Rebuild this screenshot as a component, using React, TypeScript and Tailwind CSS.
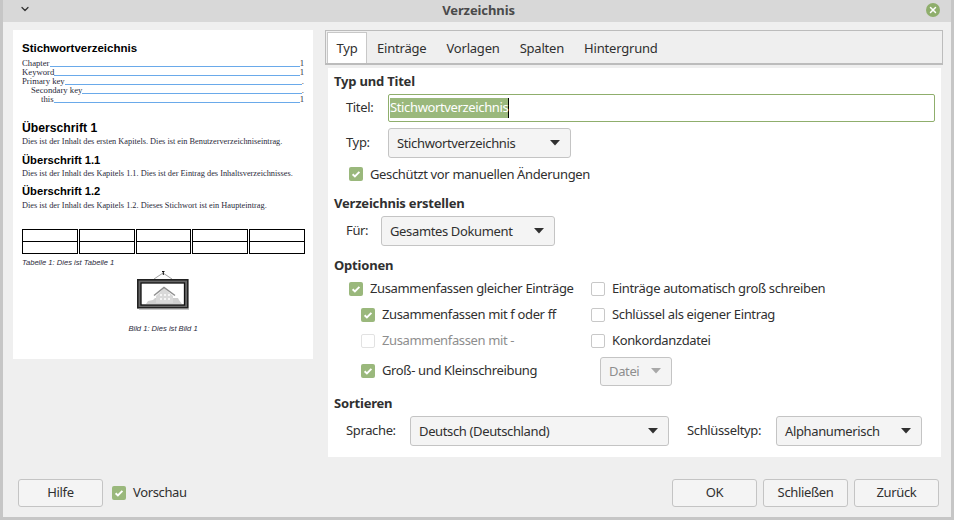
import { ChevronDown, X } from "lucide-react";

const ui = "font-['Noto_Sans',sans-serif] text-[13px] tracking-[-0.36px] text-[#303030]";

function Caret({ muted }: { muted?: boolean }) {
  return (
    <svg width="10" height="6" viewBox="0 0 10 6" className="shrink-0">
      <path d="M0 0h10L5 5.5z" fill={muted ? "#a8a8a8" : "#303030"} />
    </svg>
  );
}

function Combo({ label, className, muted }: { label: string; className: string; muted?: boolean }) {
  return (
    <div
      className={`flex items-center justify-between rounded-[3px] border border-[#c4c4c4] bg-[#f4f4f4] pl-2 pr-[10px] ${muted ? "text-[#8e8e8e]" : ""} ${className}`}
    >
      <span className="pt-[1px]">{label}</span>
      <Caret muted={muted} />
    </div>
  );
}

function Check({ label, checked, disabled }: { label: string; checked?: boolean; disabled?: boolean }) {
  return (
    <div className={`flex items-center gap-[7px] ${disabled ? "text-[#8e8e8e]" : ""}`}>
      {checked ? (
        <svg width="14" height="14" viewBox="0 0 14 14" className="shrink-0">
          <rect width="14" height="14" rx="2" fill="#9ab87c" />
          <path d="M3.6 7.2l2.3 2.2 4.5-4.6" fill="none" stroke="#fff" strokeWidth="1.9" />
        </svg>
      ) : (
        <span className={`size-[14px] shrink-0 rounded-[2px] border bg-white ${disabled ? "border-[#e2e2e2]" : "border-[#c8c8c8]"}`} />
      )}
      <span>{label}</span>
    </div>
  );
}

function Button({ label }: { label: string }) {
  return (
    <div className="flex h-[28px] w-[85px] items-center justify-center rounded-[3px] border border-[#c4c4c4] bg-[#f4f4f4]">
      {label}
    </div>
  );
}

function Heading({ children }: { children: string }) {
  return <div className="font-bold leading-[18px] tracking-[-0.2px] text-[#303030]">{children}</div>;
}

function TocRow({ label, page, indent }: { label: string; page: string; indent: string }) {
  return (
    <div className={`flex h-[9px] items-end leading-[9px] ${indent}`}>
      <span>{label}</span>
      <span className="mb-[1px] h-px flex-1 bg-[#6aaaea]" />
      <span>{page}</span>
    </div>
  );
}

function Preview() {
  const h2 = "font-['Liberation_Sans',sans-serif] font-bold text-black tracking-normal";
  const body = "text-[8.3px] leading-[10px] tracking-normal text-[#2a2a3a] whitespace-nowrap";
  const caption = "font-['Liberation_Sans',sans-serif] text-[7.6px] italic leading-[10px] tracking-normal text-[#2a2a3a]";
  return (
    <div className="flex h-[329px] w-[300px] flex-col bg-white px-[9px] pt-[12px] font-['Liberation_Serif',serif]">
      <div className={`${h2} text-[11.5px] leading-[12px]`}>Stichwortverzeichnis</div>
      <div className="mt-[5px] text-[8.7px] tracking-normal text-[#2a2a3a]">
        <TocRow label="Chapter" page="1" indent="" />
        <TocRow label="Keyword" page="1" indent="" />
        <TocRow label="Primary key" page="." indent="" />
        <TocRow label="Secondary key" page="." indent="pl-[9px]" />
        <TocRow label="this" page="1" indent="pl-[19px]" />
      </div>
      <div className={`${h2} mt-[17px] text-[12.2px] leading-[14px]`}>Überschrift 1</div>
      <div className={`${body} mt-[2px]`}>Dies ist der Inhalt des ersten Kapitels. Dies ist ein Benutzerverzeichniseintrag.</div>
      <div className={`${h2} mt-[7px] text-[11.2px] leading-[12px]`}>Überschrift 1.1</div>
      <div className={`${body} mt-[3px]`}>Dies ist der Inhalt des Kapitels 1.1. Dies ist der Eintrag des Inhaltsverzeichnisses.</div>
      <div className={`${h2} mt-[6px] text-[11.2px] leading-[12px]`}>Überschrift 1.2</div>
      <div className={`${body} mt-[4px]`}>Dies ist der Inhalt des Kapitels 1.2. Dieses Stichwort ist ein Haupteintrag.</div>
      <div className="mt-[18px] grid w-[283px] grid-cols-5 gap-x-px">
        {Array.from({ length: 10 }).map((_, i) => (
          <div key={i} className={`h-[12px] border-x border-t border-black ${i > 4 ? "h-[13px] border-b" : ""}`} />
        ))}
      </div>
      <div className={`${caption} mt-[4px]`}>Tabelle 1: Dies ist Tabelle 1</div>
      <div className="mt-[2px] flex justify-center">
        <svg width="54" height="40" viewBox="0 0 54 40">
          <path d="M18 9l9-6 9 6" fill="none" stroke="#777" strokeWidth="0.7" />
          <path d="M26 1h2.500v1h-.7v3h-1v-3H26z" fill="#111" />
          <rect x="1.800" y="9.800" width="50" height="28" fill="#666" stroke="#222" strokeWidth="1.600" />
          <rect x="5" y="13" width="43.500" height="22" fill="#fff" stroke="#111" strokeWidth="1.300" />
          <path d="M10 34l2-3 5-1 2-2h23l1 2 3 4z" fill="#cfcfcf" />
          <path d="M20 26l8-8 9 8v7H20z" fill="#d9d9d9" />
          <path d="M18 25.500l10-8 11 8" fill="none" stroke="#8f8f8f" strokeWidth="1.500" />
          <path d="M24 24h2v2h-2zM28 24h2v2h-2zM32 24h2v2h-2zM24 28h2v2h-2zM28 28h2v2h-2zM32 28h2v2h-2z" fill="#f5f5f5" />
          <path d="M3 39.300h50" stroke="#bbb" strokeWidth="1" />
        </svg>
      </div>
      <div className={`${caption} mt-[14px] text-center`}>Bild 1: Dies ist Bild 1</div>
    </div>
  );
}

export default function App() {
  const tabs = ["Einträge", "Vorlagen", "Spalten", "Hintergrund"];
  return (
    <div className={`flex h-[520px] w-[954px] flex-col overflow-hidden border-x-[3px] border-b-[3px] border-[#c6c6c6] bg-[#efefef] ${ui}`}>
      <div className="relative flex h-[22px] shrink-0 items-center justify-center bg-[#d8d8d8] pl-[3px] font-bold tracking-[-0.1px] text-[#4a4a4a]">
        <ChevronDown className="absolute left-[16px] top-[3px] size-[12px] text-[#333]" strokeWidth={2.5} />
        Verzeichnis
        <span className="absolute right-[11px] top-[3px] flex size-[14px] items-center justify-center rounded-full bg-[#8fae6c]">
          <X className="size-[10px] text-white" strokeWidth={3.5} />
        </span>
      </div>

      <div className="flex flex-1 pl-[10px] pr-[8px] pt-[8px]">
        <Preview />
        <div className="ml-[12px] flex-1">
          <div className="flex h-[35px] items-stretch border-2 border-t border-x border-[#bcbcbc] pl-[1px] pt-[1px] tracking-[-0.2px]">
            <div className="flex w-[40px] items-center justify-center border-x border-t border-[#c8c8c8] bg-white pt-[1px]">Typ</div>
            {tabs.map((t) => (
              <div key={t} className="flex items-center px-[10px] pt-[3px]">
                {t}
              </div>
            ))}
          </div>
          <div className="ml-[3px] mr-[2px] mt-[3px] flex h-[389px] flex-col bg-white pl-[6px] pr-[6px] pt-[4px]">
            <Heading>Typ und Titel</Heading>
            <div className="mt-[4px] flex items-center">
              <span className="w-[54px] pl-[12px]">Titel:</span>
              <div className="flex h-[28px] flex-1 items-center rounded-[2px] border border-[#8fae6c] px-[1px]">
                <span className="flex h-[20px] items-center border-r border-black bg-[#9ab87c] text-white">Stichwortverzeichnis</span>
              </div>
            </div>
            <div className="mt-[6px] flex items-center">
              <span className="w-[54px] pl-[12px]">Typ:</span>
              <Combo label="Stichwortverzeichnis" className="h-[30px] w-[183px]" />
            </div>
            <div className="ml-[15px] mt-[9px] leading-[14px]">
              <Check label="Geschützt vor manuellen Änderungen" checked />
            </div>
            <div className="mt-[13px]">
              <Heading>Verzeichnis erstellen</Heading>
            </div>
            <div className="mt-[4px] flex items-center">
              <span className="w-[47px] pl-[12px]">Für:</span>
              <Combo label="Gesamtes Dokument" className="h-[30px] w-[174px]" />
            </div>
            <div className="mt-[10px]">
              <Heading>Optionen</Heading>
            </div>
            <div className="mt-[2px] grid grid-cols-[242px_1fr] pl-[15px]">
              <div className="flex h-[26px] items-center">
                <Check label="Zusammenfassen gleicher Einträge" checked />
              </div>
              <div className="flex h-[26px] items-center">
                <Check label="Einträge automatisch groß schreiben" />
              </div>
              <div className="flex h-[26px] items-center pl-[12px]">
                <Check label="Zusammenfassen mit f oder ff" checked />
              </div>
              <div className="flex h-[26px] items-center">
                <Check label="Schlüssel als eigener Eintrag" />
              </div>
              <div className="flex h-[26px] items-center pl-[12px]">
                <Check label="Zusammenfassen mit -" disabled />
              </div>
              <div className="flex h-[26px] items-center">
                <Check label="Konkordanzdatei" />
              </div>
              <div className="flex h-[34px] items-center pl-[12px]">
                <Check label="Groß- und Kleinschreibung" checked />
              </div>
              <div className="flex h-[34px] items-center pl-[9px]">
                <Combo label="Datei" muted className="h-[29px] w-[72px]" />
              </div>
            </div>
            <div className="mt-[6px]">
              <Heading>Sortieren</Heading>
            </div>
            <div className="mt-[4px] flex items-center pl-[12px]">
              <span className="w-[64px]">Sprache:</span>
              <Combo label="Deutsch (Deutschland)" className="h-[30px] w-[259px]" />
              <span className="ml-[18px] w-[89px]">Schlüsseltyp:</span>
              <Combo label="Alphanumerisch" className="h-[30px] w-[146px]" />
            </div>
          </div>
        </div>
      </div>

      <div className="mb-[10px] flex items-center pl-[15px] pr-[12px]">
        <Button label="Hilfe" />
        <div className="ml-[9px]">
          <Check label="Vorschau" checked />
        </div>
        <div className="ml-auto flex gap-[6px]">
          <Button label="OK" />
          <Button label="Schließen" />
          <Button label="Zurück" />
        </div>
      </div>
    </div>
  );
}
